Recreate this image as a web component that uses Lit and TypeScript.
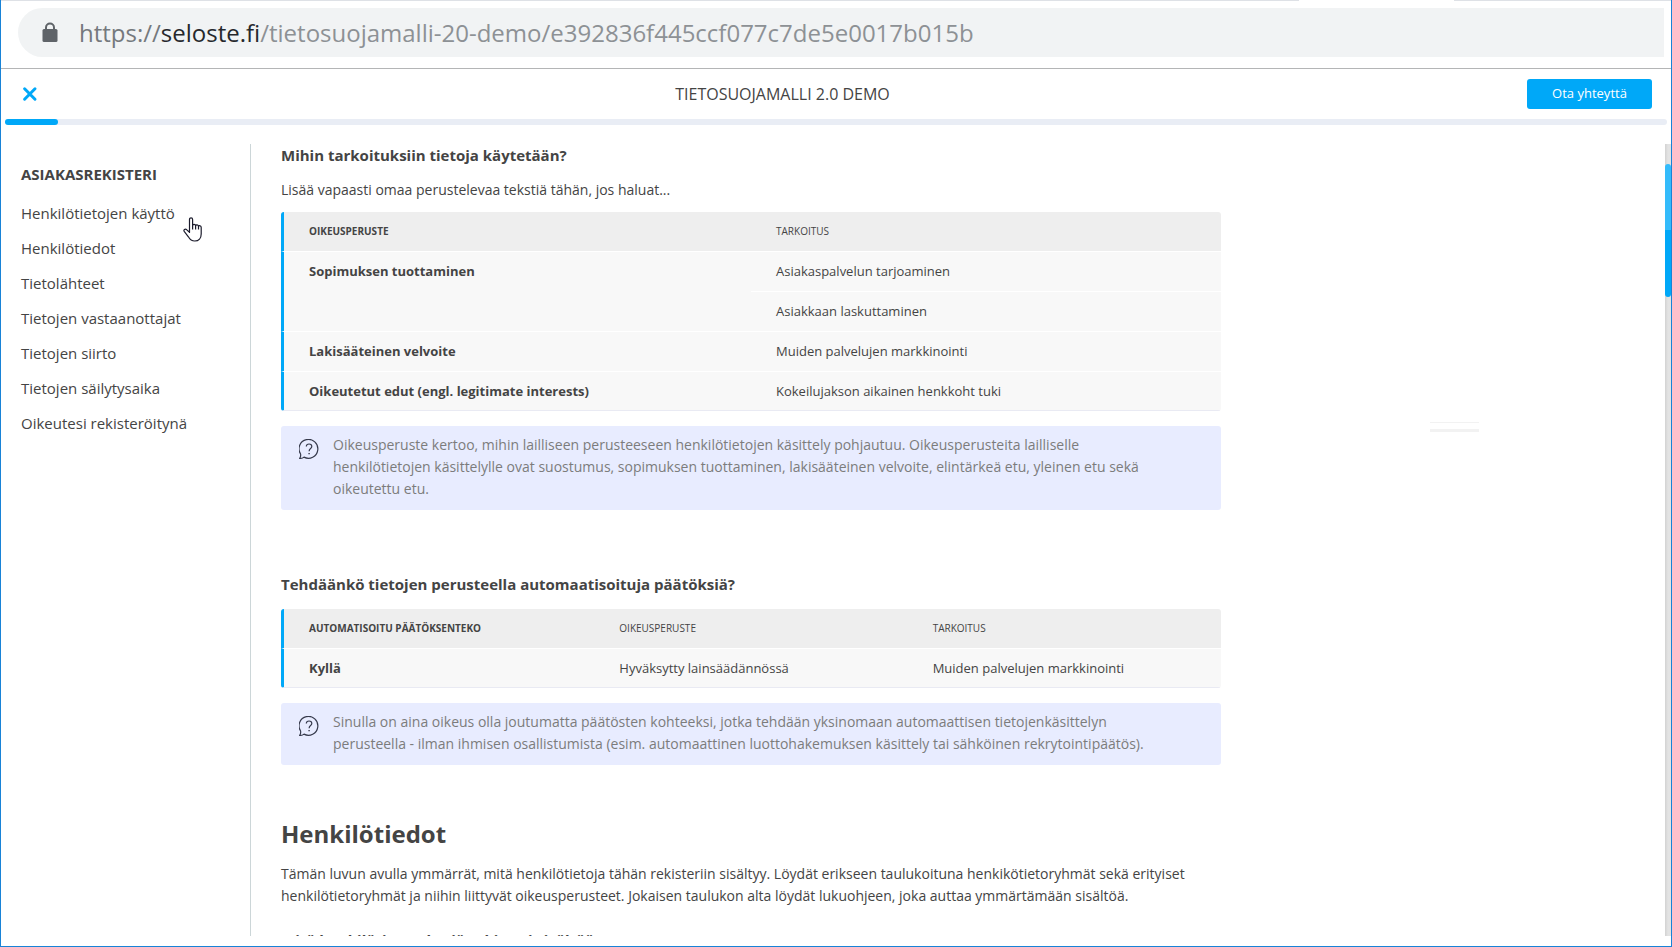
import { LitElement, html, css, svg } from "lit";
import { customElement, property } from "lit/decorators.js";

const FONT = css`"Open Sans", "Noto Sans", sans-serif`;

@customElement("address-bar")
class AddressBar extends LitElement {
  static styles = css`
    :host {
      display: block;
      font-family: ${FONT};
      border-bottom: 1px solid #b4b5b6;
    }
    .tabs {
      display: flex;
      justify-content: flex-end;
      height: 1px;
      padding-right: 217px;
      background: #dee1e6;
    }
    .tab {
      width: 155px;
      background: #fff;
    }
    .bar {
      display: flex;
      align-items: center;
      height: 49px;
      margin: 7px 7px 11px 17px;
      padding-left: 24px;
      gap: 21px;
      border-radius: 25px 0 0 25px;
      background: #f1f3f4;
    }
    .lock {
      flex: none;
    }
    .url {
      font-size: 24px;
      line-height: 32px;
      color: #8d9195;
      white-space: nowrap;
      overflow: hidden;
    }
    .scheme {
      color: #75797d;
    }
    .host {
      color: #26282c;
    }
  `;

  render() {
    return html`
      <div class="tabs"><span class="tab"></span></div>
      <div class="bar">
        <svg class="lock" width="16" height="21" viewBox="0 0 16 21" aria-hidden="true">
          <path d="M4 8V5.5a4 4 0 0 1 8 0V8" fill="none" stroke="#5f6368" stroke-width="2" />
          <rect x="0.5" y="7" width="15" height="13" rx="1.5" fill="#5f6368" />
        </svg>
        <div class="url"><span class="scheme">https://</span><span class="host">seloste.fi</span>/tietosuojamalli-20-demo/e392836f445ccf077c7de5e0017b015b</div>
      </div>
    `;
  }
}

@customElement("info-note")
class InfoNote extends LitElement {
  static styles = css`
    :host {
      display: flex;
      gap: 14px;
      margin-top: 15px;
      padding: 8px 60px 10px 18px;
      border-radius: 3px;
      background: #e8ecff;
      color: #7c7c7c;
    }
    .icon {
      flex: none;
      margin-top: 5px;
    }
    .text {
      font-size: 14px;
      line-height: 22px;
    }
  `;

  render() {
    return html`
      <svg class="icon" width="20" height="20" viewBox="0 0 20 20" fill="none" stroke="#363a4c" aria-hidden="true">
        <path d="M0.6 19.4C1.7 18.4 1.9 17.2 1.6 15A9.4 9.4 0 1 1 5 18.1C3.8 19.1 2.2 19.5 0.6 19.4Z" stroke-width="1.2" stroke-linejoin="round" />
        <path d="M7.3 7.6C7.3 6 8.4 5 10 5S12.8 6 12.8 7.5C12.8 9.5 10.1 9.6 10.1 12.2" stroke-width="1.2" />
        <path d="M9.4 14.6H10.8" stroke-width="1.2" />
      </svg>
      <div class="text"><slot></slot></div>
    `;
  }
}

interface Row {
  head: string;
  cells: string[][];
}

@customElement("basis-table")
class BasisTable extends LitElement {
  @property({ attribute: false }) columns: string[] = [];
  @property({ attribute: false }) rows: Row[] = [];

  static styles = css`
    :host {
      display: block;
    }
    .table {
      width: 100%;
      table-layout: fixed;
      border-spacing: 0;
      border-radius: 3px;
      overflow: hidden;
      color: #444;
    }
    .cell {
      height: 29px;
      padding: 10px 25px 0;
      border-bottom: 1px solid #fff;
      background: #f8f8f8;
      font-size: 13px;
      line-height: 18px;
      font-weight: 400;
      text-align: left;
      vertical-align: top;
    }
    .first {
      border-left: 3px solid #00a8f8;
      font-weight: 700;
    }
    .label {
      background: #eee;
      font-size: 10px;
      text-transform: uppercase;
    }
    .last {
      border-bottom-color: #e9eaf3;
      height: 28px;
    }
  `;

  render() {
    const lastRow = this.rows.length - 1;
    return html`
      <table class="table">
        <thead>
          <tr>
            ${this.columns.map((c, i) => html`<th scope="col" class="cell label ${i ? "" : "first"}">${c}</th>`)}
          </tr>
        </thead>
        <tbody>
          ${this.rows.map((row, r) =>
            row.cells.map(
              (line, n) => html`<tr>
                ${n === 0
                  ? html`<th scope="rowgroup" rowspan=${row.cells.length} class="cell first ${r === lastRow ? "last" : ""}">${row.head}</th>`
                  : ""}
                ${line.map((c) => html`<td class="cell ${r === lastRow ? "last" : ""}">${c}</td>`)}
              </tr>`
            )
          )}
        </tbody>
      </table>
    `;
  }
}

const LINKS = [
  "Henkilötietojen käyttö",
  "Henkilötiedot",
  "Tietolähteet",
  "Tietojen vastaanottajat",
  "Tietojen siirto",
  "Tietojen säilytysaika",
  "Oikeutesi rekisteröitynä",
];

const PURPOSES: Row[] = [
  { head: "Sopimuksen tuottaminen", cells: [["Asiakaspalvelun tarjoaminen"], ["Asiakkaan laskuttaminen"]] },
  { head: "Lakisääteinen velvoite", cells: [["Muiden palvelujen markkinointi"]] },
  { head: "Oikeutetut edut (engl. legitimate interests)", cells: [["Kokeilujakson aikainen henkkoht tuki"]] },
];

const DECISIONS: Row[] = [
  { head: "Kyllä", cells: [["Hyväksytty lainsäädännössä", "Muiden palvelujen markkinointi"]] },
];

const pointer = svg`
  <path d="M6.5 15.5V2.6C6.5 0.2 9.6 0.2 9.6 2.6V8.6C9.8 6.8 12.5 7 12.6 8.8C13 7.3 15.4 7.6 15.5 9.4C16 8.2 18.2 8.6 18.2 10.5V17C18.2 21 15.8 24 11.8 24C8.6 24 6.8 22.4 5.4 19.8L1.2 14.4C0.2 12.9 2.2 11.6 3.5 12.6L6.5 15.2Z"
    fill="#fff" stroke="#1b1b2b" stroke-width="1.2" stroke-linejoin="round" />
  <path d="M9.6 8.4V12.5M12.6 8.8V12.5M15.5 9.4V12.5" fill="none" stroke="#1b1b2b" stroke-width="1.2" />
`;

@customElement("app-root")
class AppRoot extends LitElement {
  static styles = css`
    :host {
      display: flex;
      flex-direction: column;
      box-sizing: border-box;
      height: 100vh;
      border: 1px solid #1883d7;
      border-top: 0;
      background: #fff;
      color: #444;
      font-family: ${FONT};
      overflow: hidden;
    }
    .header {
      display: flex;
      align-items: center;
      justify-content: space-between;
      padding: 10px 19px 10px 21px;
    }
    .close {
      display: flex;
      width: 16px;
      padding: 0;
      border: 0;
      background: none;
    }
    .title {
      margin: 0;
      font-size: 16px;
      line-height: 22px;
      font-weight: 400;
    }
    .contact {
      width: 125px;
      height: 30px;
      padding: 0 0 2px;
      border: 0;
      border-radius: 3px;
      background: #00a8f8;
      color: #fff;
      font-family: inherit;
      font-size: 13px;
      line-height: 18px;
    }
    .track {
      flex: none;
      height: 6px;
      margin: 0 4px;
      border-radius: 3px;
      background: #e9edf5;
    }
    .fill {
      width: 53px;
      height: 6px;
      border-radius: 3px;
      background: #00a8f8;
    }
    .body {
      flex: 1;
      min-height: 0;
      display: flex;
      margin: 19px 0 10px;
    }
    .sidebar {
      position: relative;
      flex: none;
      box-sizing: border-box;
      width: 250px;
      padding: 20px 20px 0;
      border-right: 1px solid #ccd6d8;
    }
    .register {
      margin: 0 0 12px;
      font-size: 15px;
      line-height: 20px;
      font-weight: 700;
    }
    .links {
      display: flex;
      flex-direction: column;
      margin: 0;
      padding: 0;
      list-style: none;
    }
    .link {
      color: #444;
      font-size: 15px;
      line-height: 35px;
      text-decoration: none;
    }
    .pointer {
      position: absolute;
      left: 182px;
      top: 73px;
    }
    .content {
      flex: 0 1 940px;
      padding-left: 30px;
      overflow: hidden;
    }
    .question {
      margin: 63px 0 14px;
      font-size: 15px;
      line-height: 22px;
      font-weight: 700;
    }
    .opening {
      margin: 0 0 13px;
    }
    .text {
      margin: 0;
      font-size: 14px;
      line-height: 22px;
    }
    .intro {
      margin-bottom: 11px;
    }
    .chapter {
      margin: 52px 0 12px;
      font-size: 24px;
      line-height: 34px;
      font-weight: 700;
    }
    .next {
      margin-top: 22px;
    }
    .aside {
      flex: 1;
      padding: 278px 0 0 209px;
    }
    .rule {
      width: 49px;
      height: 1px;
      background: #f2f2f2;
    }
    .thick {
      height: 3px;
      margin-top: 6px;
    }
    .scroll {
      flex: none;
      width: 6px;
      padding-top: 20px;
      box-sizing: border-box;
      background: linear-gradient(to right, #d2d2d2, #e3e3e3 50%);
    }
    .thumb {
      height: 133px;
      border-radius: 3px;
      background: linear-gradient(#33bbfb 66px, #00a8f8 66px);
    }
  `;

  render() {
    return html`
      <address-bar></address-bar>
      <header class="header">
        <button class="close" aria-label="Sulje">
          <svg width="16" height="16" viewBox="0 0 16 16" aria-hidden="true">
            <path d="M2.6 2.8L13 13.2M13 2.8L2.6 13.2" stroke="#00a8f8" stroke-width="3" stroke-linecap="round" />
          </svg>
        </button>
        <h1 class="title">TIETOSUOJAMALLI 2.0 DEMO</h1>
        <button class="contact">Ota yhteyttä</button>
      </header>
      <div class="track"><div class="fill"></div></div>
      <div class="body">
        <nav class="sidebar">
          <h2 class="register">ASIAKASREKISTERI</h2>
          <ul class="links">
            ${LINKS.map((l) => html`<li><a class="link" href="#">${l}</a></li>`)}
          </ul>
          <svg class="pointer" width="20" height="25" viewBox="0 0 20 25" aria-hidden="true">${pointer}</svg>
        </nav>
        <main class="content">
          <h3 class="question opening">Mihin tarkoituksiin tietoja käytetään?</h3>
          <p class="text intro">Lisää vapaasti omaa perustelevaa tekstiä tähän, jos haluat...</p>
          <basis-table .columns=${["Oikeusperuste", "Tarkoitus"]} .rows=${PURPOSES}></basis-table>
          <info-note>Oikeusperuste kertoo, mihin lailliseen perusteeseen henkilötietojen käsittely pohjautuu. Oikeusperusteita lailliselle henkilötietojen käsittelylle ovat suostumus, sopimuksen tuottaminen, lakisääteinen velvoite, elintärkeä etu, yleinen etu sekä oikeutettu etu.</info-note>
          <h3 class="question">Tehdäänkö tietojen perusteella automaatisoituja päätöksiä?</h3>
          <basis-table .columns=${["Automatisoitu päätöksenteko", "Oikeusperuste", "Tarkoitus"]} .rows=${DECISIONS}></basis-table>
          <info-note>Sinulla on aina oikeus olla joutumatta päätösten kohteeksi, jotka tehdään yksinomaan automaattisen tietojenkäsittelyn perusteella - ilman ihmisen osallistumista (esim. automaattinen luottohakemuksen käsittely tai sähköinen rekrytointipäätös).</info-note>
          <h2 class="chapter">Henkilötiedot</h2>
          <p class="text">Tämän luvun avulla ymmärrät, mitä henkilötietoja tähän rekisteriin sisältyy. Löydät erikseen taulukoituna henkikötietoryhmät sekä erityiset henkilötietoryhmät ja niihin liittyvät oikeusperusteet. Jokaisen taulukon alta löydät lukuohjeen, joka auttaa ymmärtämään sisältöä.</p>
          <h3 class="question next">Mitä henkilötietoryhmiä rekisteri sisältää?</h3>
        </main>
        <aside class="aside">
          <div class="rule"></div>
          <div class="rule thick"></div>
        </aside>
        <div class="scroll"><div class="thumb"></div></div>
      </div>
    `;
  }
}
